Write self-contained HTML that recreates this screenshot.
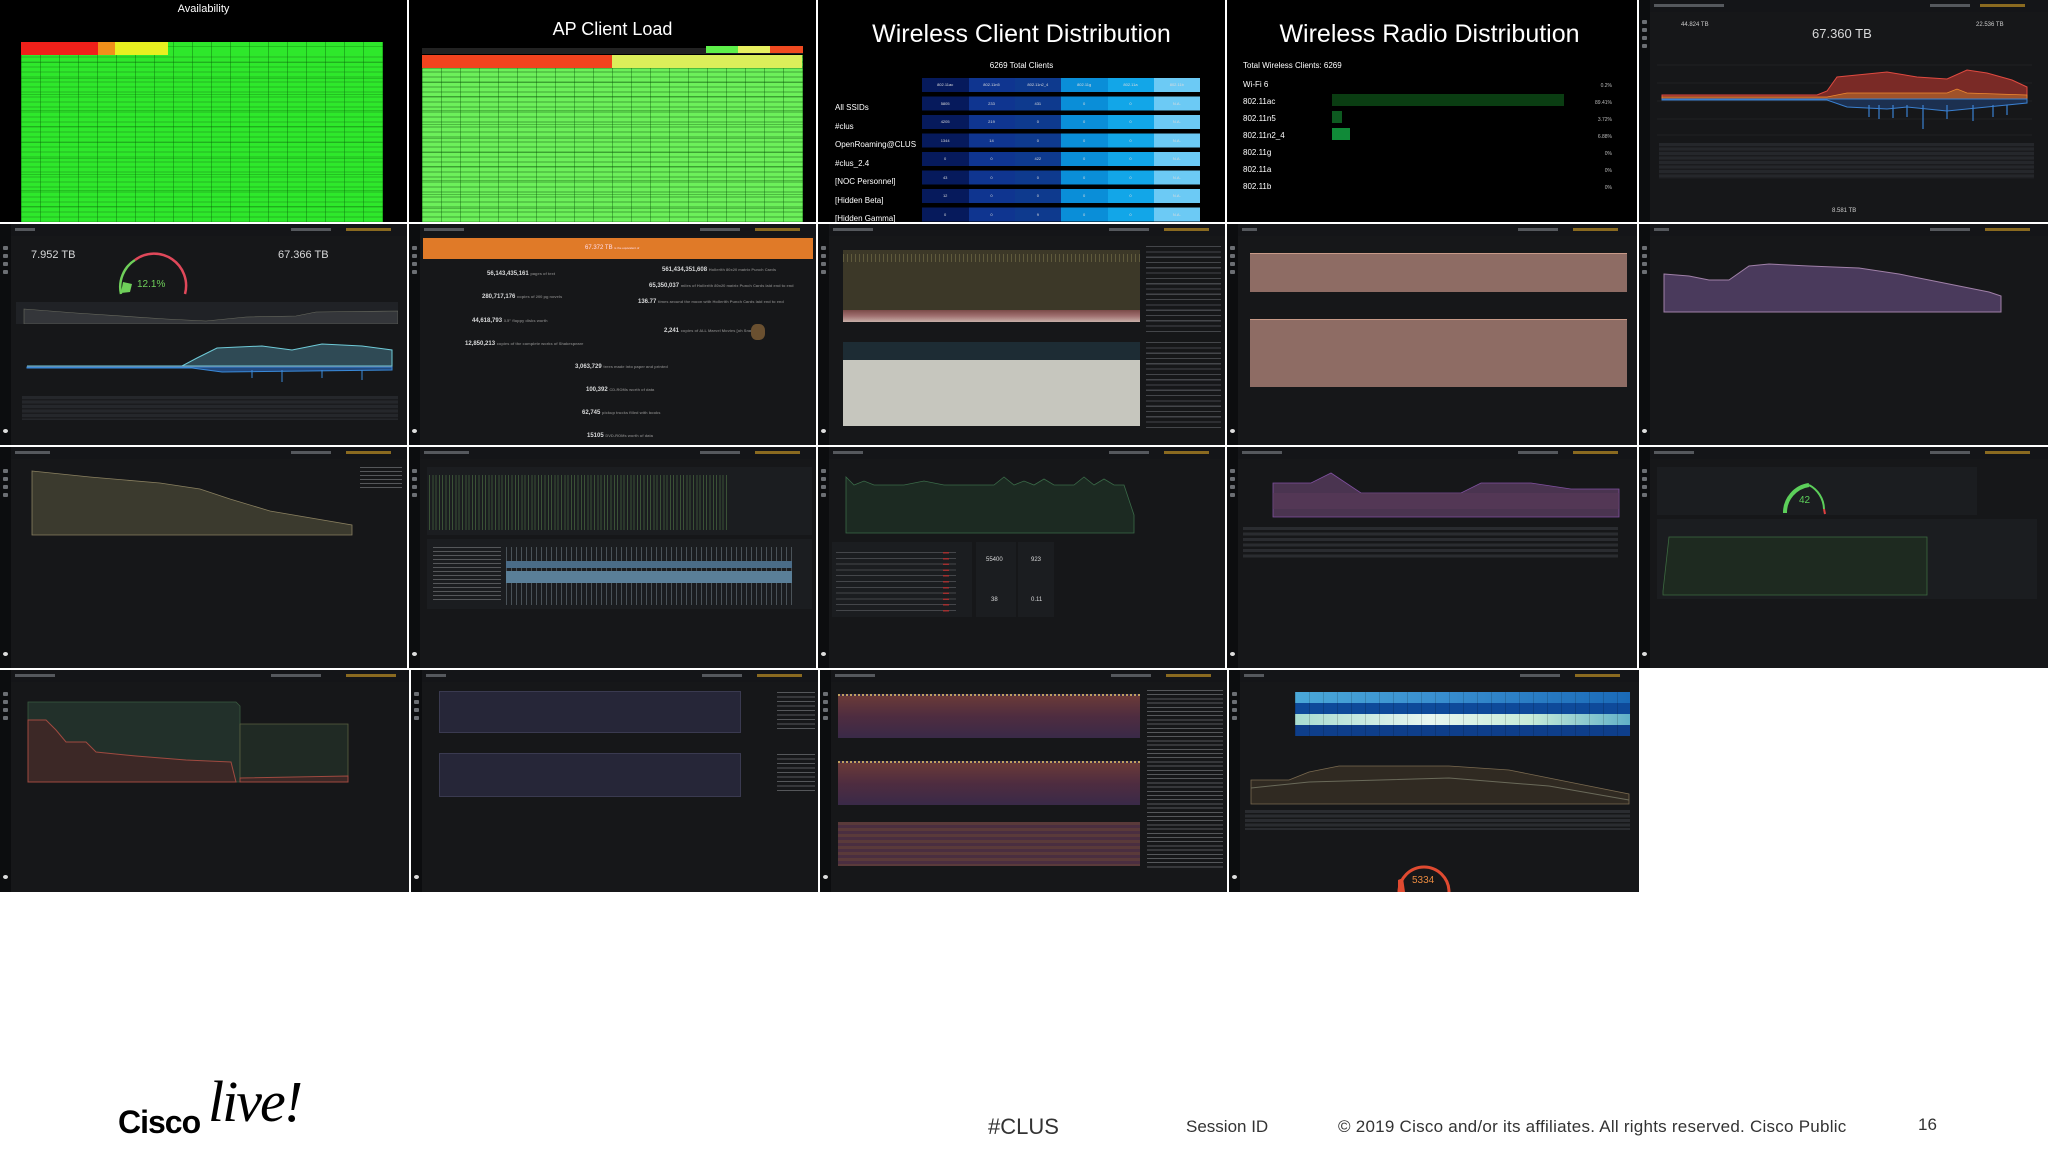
<!DOCTYPE html>
<html><head><meta charset="utf-8"><style>
*{margin:0;padding:0;box-sizing:border-box}
body{width:2048px;height:1152px;background:#fff;position:relative;overflow:hidden;font-family:"Liberation Sans",sans-serif}
.p{position:absolute;overflow:hidden;background:#000}
.g{background:#161719}
.a{position:absolute}
.sb{position:absolute;left:0;top:0;width:11px;height:100%;background:#0c0d0f}
.sb i{position:absolute;left:3px;width:5px;height:4px;background:#6b6e73;border-radius:1px}
.hd{position:absolute;left:11px;top:0;right:0;height:12px;background:#141518}
.hd b{position:absolute;top:4px;height:3px;background:#55585d}
.t{position:absolute;color:#d8d9da;white-space:nowrap}
.w{color:#fff}
.tiny{font-size:4px;color:#777}
.row{position:absolute;left:104px;width:278px;height:14px;font-size:4px;color:#ddd;display:flex}
.row span{flex:1;text-align:center;line-height:14px}
</style></head><body>

<!-- ROW 1 -->
<div class="p" style="left:0;top:0;width:407px;height:222px;">
 <div class="t w" style="left:0;width:407px;text-align:center;top:3px;font-size:11px">Availability</div>
 <div class="a" style="left:21px;top:42px;width:362px;height:181px;background:#2ee82b;background-image:repeating-linear-gradient(90deg,rgba(0,80,0,.35) 0 1px,transparent 1px 19px),repeating-linear-gradient(0deg,rgba(0,80,0,.25) 0 1px,transparent 1px 16px)"></div>
 <div class="a" style="left:21px;top:42px;width:77px;height:13px;background:#f0201a"></div>
 <div class="a" style="left:98px;top:42px;width:17px;height:13px;background:#f0901a"></div>
 <div class="a" style="left:115px;top:42px;width:53px;height:13px;background:#e8f020"></div>
 <div class="a" style="left:21px;top:55px;width:362px;height:168px;background-image:repeating-linear-gradient(0deg,rgba(20,90,20,.35) 0 2px,transparent 2px 5px);opacity:.5"></div>
</div>

<div class="p" style="left:409px;top:0;width:407px;height:222px;">
 <div class="t w" style="left:0;width:407px;text-align:center;top:19px;font-size:18px">AP Client Load</div>
 <div class="a" style="left:13px;top:48px;width:381px;height:6px;background:#222"></div>
 <div class="a" style="left:297px;top:46px;width:97px;height:7px;background:linear-gradient(90deg,#5ef04a 0 33%,#e8f060 33% 66%,#f04a20 66%)"></div>
 <div class="a" style="left:13px;top:55px;width:381px;height:168px;background:#6cf05a;background-image:repeating-linear-gradient(90deg,rgba(0,70,0,.35) 0 1px,transparent 1px 19px),repeating-linear-gradient(0deg,rgba(0,70,0,.3) 0 1px,transparent 1px 14px),repeating-linear-gradient(0deg,rgba(20,90,20,.25) 0 2px,transparent 2px 5px)"></div>
 <div class="a" style="left:13px;top:55px;width:190px;height:13px;background:#f2431e"></div>
 <div class="a" style="left:203px;top:55px;width:190px;height:13px;background:#dcee5a"></div>
</div>

<div class="p" style="left:818px;top:0;width:407px;height:222px;">
 <div class="t w" style="left:0;width:407px;text-align:center;top:20px;font-size:25px">Wireless Client Distribution</div>
 <div class="t w" style="left:0;width:407px;text-align:center;top:61px;font-size:8px">6269 Total Clients</div>
 <div class="t w" style="left:17px;top:99px;font-size:8px;line-height:18.5px">All SSIDs<br>#clus<br>OpenRoaming@CLUS<br>#clus_2.4<br>[NOC Personnel]<br>[Hidden Beta]<br>[Hidden Gamma]</div>
 <div class="a" style="left:104px;top:78px;width:278px;height:145px;background:linear-gradient(90deg,#061a5c 0 47px,#0f3590 47px 93px,#0e3a8e 93px 139px,#0a8ed8 139px 186px,#12a6e8 186px 232px,#6ccaf5 232px)"></div>
 <div class="a" style="left:104px;top:78px;width:278px;height:145px;background:repeating-linear-gradient(180deg,transparent 0 14px,#000 14px 18.5px)"></div>
 <div class="row" style="top:78px"><span>802.11ac</span><span>802.11n5</span><span>802.11n2_4</span><span>802.11g</span><span>802.11a</span><span>802.11b</span></div>
 <div class="row" style="top:96.5px"><span>5805</span><span>233</span><span>431</span><span>0</span><span>0</span><span>N.A.</span></div>
 <div class="row" style="top:115px"><span>4205</span><span>219</span><span>0</span><span>0</span><span>0</span><span>N.A.</span></div>
 <div class="row" style="top:133.5px"><span>1344</span><span>14</span><span>0</span><span>0</span><span>0</span><span>N.A.</span></div>
 <div class="row" style="top:152px"><span>0</span><span>0</span><span>422</span><span>0</span><span>0</span><span>N.A.</span></div>
 <div class="row" style="top:170.5px"><span>43</span><span>0</span><span>0</span><span>0</span><span>0</span><span>N.A.</span></div>
 <div class="row" style="top:189px"><span>12</span><span>0</span><span>0</span><span>0</span><span>0</span><span>N.A.</span></div>
 <div class="row" style="top:207.5px"><span>0</span><span>0</span><span>9</span><span>0</span><span>0</span><span>N.A.</span></div>
</div>

<div class="p" style="left:1227px;top:0;width:410px;height:222px;">
 <div class="t w" style="left:0;width:405px;text-align:center;top:20px;font-size:25px">Wireless Radio Distribution</div>
 <div class="t w" style="left:16px;top:61px;font-size:8px">Total Wireless Clients: 6269</div>
 <div class="t w" style="left:16px;top:76px;font-size:8px;line-height:17px">Wi-Fi 6<br>802.11ac<br>802.11n5<br>802.11n2_4<br>802.11g<br>802.11a<br>802.11b</div>
 <div class="t" style="left:350px;top:78px;font-size:5px;line-height:17px;text-align:right;width:35px;color:#bbb">0.2%<br>89.41%<br>3.72%<br>6.88%<br>0%<br>0%<br>0%</div>
 <div class="a" style="left:105px;top:94px;width:232px;height:12px;background:#0a3d12"></div>
 <div class="a" style="left:105px;top:111px;width:10px;height:12px;background:#0d5a20"></div>
 <div class="a" style="left:105px;top:128px;width:18px;height:12px;background:#108a38"></div>
</div>

<div class="p g" style="left:1639px;top:0;width:409px;height:222px;">
 <div class="sb"><i style="top:20px"></i><i style="top:28px"></i><i style="top:36px"></i><i style="top:44px"></i></div>
 <div class="hd"><b style="left:4px;width:70px"></b><b style="left:280px;width:40px"></b><b style="left:330px;width:45px;background:#8a6a20"></b></div>
 <div class="t" style="left:42px;top:22px;font-size:6px;color:#ccc">44.824 TB</div>
 <div class="t" style="left:173px;top:26px;font-size:13px">67.360 TB</div>
 <div class="t" style="left:337px;top:22px;font-size:6px;color:#ccc">22.536 TB</div>
 <svg class="a" style="left:18px;top:55px" width="375" height="85" viewBox="0 0 375 85">
  <g stroke="#2a2c30" stroke-width=".6"><line x1="0" y1="10" x2="375" y2="10"/><line x1="0" y1="28" x2="375" y2="28"/><line x1="0" y1="46" x2="375" y2="46"/><line x1="0" y1="64" x2="375" y2="64"/><line x1="0" y1="80" x2="375" y2="80"/></g>
  <path d="M5 40 L160 40 L170 36 L180 22 L200 20 L230 17 L260 22 L290 24 L310 15 L330 18 L355 25 L370 32 L370 44 L5 44Z" fill="#7a2a26" stroke="#e04a40" stroke-width="1"/>
  <path d="M5 42 L170 42 L190 38 L290 38 L300 34 L310 38 L370 40 L370 44 L5 44Z" fill="#a0522a" stroke="#f08a30" stroke-width=".8"/>
  <path d="M5 45 L170 45 L190 52 L230 54 L250 52 L290 56 L330 52 L370 48 L370 44 L5 44Z" fill="#1c3050" stroke="#3a80d0" stroke-width="1"/>
  <g stroke="#3a80d0" stroke-width="1.2"><line x1="212" y1="50" x2="212" y2="62"/><line x1="222" y1="50" x2="222" y2="64"/><line x1="236" y1="50" x2="236" y2="63"/><line x1="250" y1="50" x2="250" y2="62"/><line x1="266" y1="50" x2="266" y2="74"/><line x1="290" y1="50" x2="290" y2="64"/><line x1="316" y1="50" x2="316" y2="66"/><line x1="336" y1="50" x2="336" y2="62"/><line x1="350" y1="50" x2="350" y2="60"/></g>
 </svg>
 <div class="a" style="left:20px;top:143px;width:375px;height:36px;background:repeating-linear-gradient(180deg,#25272b 0 3px,#1a1b1e 3px 4.5px)"></div>
 <div class="t" style="left:193px;top:208px;font-size:6px;color:#ccc">8.581 TB</div>
</div>

<!-- ROW 2 -->
<div class="p g" style="left:0;top:224px;width:407px;height:221px;">
 <div class="sb"><i style="top:22px"></i><i style="top:30px"></i><i style="top:38px"></i><i style="top:46px"></i><i style="top:205px;background:#ddd;border-radius:50%"></i></div>
 <div class="hd"><b style="left:4px;width:20px"></b><b style="left:280px;width:40px"></b><b style="left:335px;width:45px;background:#8a6a20"></b></div>
 <div class="t" style="left:31px;top:25px;font-size:11px">7.952 TB</div>
 <svg class="a" style="left:115px;top:22px" width="75" height="50" viewBox="0 0 75 50"><path d="M6 48 A32 32 0 0 1 20 14" stroke="#6fcf5a" stroke-width="2.5" fill="none"/><path d="M20 14 A32 32 0 0 1 70 48" stroke="#e0485a" stroke-width="2.5" fill="none"/><path d="M6 47 L8 36 L17 38 L15 46Z" fill="#6fcf5a"/></svg>
 <div class="t" style="left:137px;top:55px;font-size:10px;color:#6fcf5a">12.1%</div>
 <div class="t" style="left:278px;top:25px;font-size:11px">67.366 TB</div>
 <div class="a" style="left:16px;top:78px;width:382px;height:22px;background:#202226"></div>
 <svg class="a" style="left:16px;top:78px" width="382" height="22"><path d="M8 7 L60 11 L150 17 L190 19 L230 15 L280 14 L300 10 L382 9 L382 22 L8 22Z" fill="#34363a" stroke="#6a6c60" stroke-width=".6"/></svg>
 <svg class="a" style="left:22px;top:112px" width="376" height="50"><path d="M5 30 L160 30 L175 22 L195 12 L240 10 L270 14 L300 8 L340 10 L370 14 L370 30Z" fill="#2f4a55" stroke="#6fcbd8" stroke-width="1"/><path d="M5 31 L370 31" stroke="#c07050" stroke-width="1.5"/><path d="M5 32 L170 32 L200 36 L370 34 L370 31 L5 31Z" fill="#234a80" stroke="#3a8ad8"/><g stroke="#3a8ad8"><line x1="230" y1="34" x2="230" y2="42"/><line x1="260" y1="34" x2="260" y2="46"/><line x1="300" y1="34" x2="300" y2="42"/><line x1="340" y1="34" x2="340" y2="44"/></g></svg>
 <div class="a" style="left:22px;top:172px;width:376px;height:24px;background:repeating-linear-gradient(180deg,#25272b 0 3px,#1a1b1e 3px 4.5px)"></div>
</div>

<div class="p g" style="left:409px;top:224px;width:407px;height:221px;">
 <div class="sb"><i style="top:22px"></i><i style="top:30px"></i><i style="top:38px"></i><i style="top:46px"></i><i style="top:205px;background:#ddd;border-radius:50%"></i></div>
 <div class="hd"><b style="left:4px;width:40px"></b><b style="left:280px;width:40px"></b><b style="left:335px;width:45px;background:#8a6a20"></b></div>
 <div class="a" style="left:14px;top:14px;width:390px;height:21px;background:#e07a28"></div>
 <div class="t" style="left:176px;top:21px;font-size:6px;color:#fde">67.372 TB <span style="font-size:3px">is the equivalent of</span></div>
 <div style="position:absolute;left:0;top:0;width:407px;height:221px;font-size:6px;color:#ddd;font-weight:bold">
  <div class="t" style="left:78px;top:47px">56,143,435,161 <span class="tiny">pages of text</span></div>
  <div class="t" style="left:73px;top:70px">280,717,176 <span class="tiny">copies of 200 pg novels</span></div>
  <div class="t" style="left:63px;top:94px">44,618,793 <span class="tiny">3.5" floppy disks worth</span></div>
  <div class="t" style="left:56px;top:117px">12,850,213 <span class="tiny">copies of the complete works of Shakespeare</span></div>
  <div class="t" style="left:253px;top:43px">561,434,351,608 <span class="tiny">Hollerith 80x20 matrix Punch Cards</span></div>
  <div class="t" style="left:240px;top:59px">65,350,037 <span class="tiny">miles of Hollerith 80x20 matrix Punch Cards laid end to end</span></div>
  <div class="t" style="left:229px;top:75px">136.77 <span class="tiny">times around the moon with Hollerith Punch Cards laid end to end</span></div>
  <div class="t" style="left:255px;top:104px">2,241 <span class="tiny">copies of ALL Marvel Movies [oh Snap]</span></div>
  <div class="a" style="left:342px;top:100px;width:14px;height:16px;background:#6a5030;border-radius:40%"></div>
  <div class="t" style="left:166px;top:140px">3,063,729 <span class="tiny">trees made into paper and printed</span></div>
  <div class="t" style="left:177px;top:163px">100,392 <span class="tiny">CD-ROMs worth of data</span></div>
  <div class="t" style="left:173px;top:186px">62,745 <span class="tiny">pickup trucks filled with books</span></div>
  <div class="t" style="left:178px;top:209px">15105 <span class="tiny">DVD-ROMs worth of data</span></div>
 </div>
</div>

<div class="p g" style="left:818px;top:224px;width:407px;height:221px;">
 <div class="sb"><i style="top:22px"></i><i style="top:30px"></i><i style="top:38px"></i><i style="top:46px"></i><i style="top:205px;background:#ddd;border-radius:50%"></i></div>
 <div class="hd"><b style="left:4px;width:40px"></b><b style="left:280px;width:40px"></b><b style="left:335px;width:45px;background:#8a6a20"></b></div>
 <div class="a" style="left:25px;top:26px;width:297px;height:72px;background:#3c3828;background-image:repeating-linear-gradient(90deg,rgba(200,190,120,.25) 0 1px,transparent 1px 4px);background-size:100% 8px;background-repeat:no-repeat;background-position:0 4px"></div>
 <div class="a" style="left:25px;top:86px;width:297px;height:12px;background:linear-gradient(#7a4a48,#a07070 50%,#c8b0a8)"></div>
 <div class="a" style="left:25px;top:118px;width:297px;height:18px;background:#1d2c34"></div>
 <div class="a" style="left:25px;top:136px;width:297px;height:66px;background:#c6c6be"></div>
 <div class="a" style="left:328px;top:22px;width:75px;height:88px;background:repeating-linear-gradient(180deg,#44464a 0 1.2px,#161719 1.2px 5.3px)"></div>
 <div class="a" style="left:328px;top:118px;width:75px;height:88px;background:repeating-linear-gradient(180deg,#44464a 0 1.2px,#161719 1.2px 5.3px)"></div>
</div>

<div class="p g" style="left:1227px;top:224px;width:410px;height:221px;">
 <div class="sb"><i style="top:22px"></i><i style="top:30px"></i><i style="top:38px"></i><i style="top:46px"></i><i style="top:205px;background:#ddd;border-radius:50%"></i></div>
 <div class="hd"><b style="left:4px;width:15px"></b><b style="left:280px;width:40px"></b><b style="left:335px;width:45px;background:#8a6a20"></b></div>
 <div class="a" style="left:23px;top:29px;width:377px;height:39px;background:#8e6c64;border-top:1px solid #c89a88"></div>
 <div class="a" style="left:23px;top:95px;width:377px;height:68px;background:#8e6c64;border-top:1px solid #c89a88"></div>
</div>

<div class="p g" style="left:1639px;top:224px;width:409px;height:221px;">
 <div class="sb"><i style="top:22px"></i><i style="top:30px"></i><i style="top:38px"></i><i style="top:46px"></i><i style="top:205px;background:#ddd;border-radius:50%"></i></div>
 <div class="hd"><b style="left:4px;width:15px"></b><b style="left:280px;width:40px"></b><b style="left:335px;width:45px;background:#8a6a20"></b></div>
 <svg class="a" style="left:20px;top:30px" width="365" height="60"><path d="M5 20 L30 22 L50 26 L70 26 L90 12 L110 10 L150 12 L200 14 L240 20 L270 26 L290 30 L310 34 L330 38 L342 42 L342 58 L5 58Z" fill="#4a3a5c" stroke="#a080a8" stroke-width="1"/></svg>
</div>

<!-- ROW 3 -->
<div class="p g" style="left:0;top:447px;width:407px;height:221px;">
 <div class="sb"><i style="top:22px"></i><i style="top:30px"></i><i style="top:38px"></i><i style="top:46px"></i><i style="top:205px;background:#ddd;border-radius:50%"></i></div>
 <div class="hd"><b style="left:4px;width:35px"></b><b style="left:280px;width:40px"></b><b style="left:335px;width:45px;background:#8a6a20"></b></div>
 <svg class="a" style="left:30px;top:20px" width="330" height="70"><path d="M2 4 L60 10 L130 16 L170 22 L200 32 L240 44 L322 58 L322 68 L2 68Z" fill="#3b3a2e" stroke="#8a8060" stroke-width=".8"/></svg>
 <div class="a" style="left:360px;top:20px;width:42px;height:22px;background:repeating-linear-gradient(180deg,#55575a 0 1px,#161719 1px 4px)"></div>
</div>

<div class="p g" style="left:409px;top:447px;width:407px;height:221px;">
 <div class="sb"><i style="top:22px"></i><i style="top:30px"></i><i style="top:38px"></i><i style="top:46px"></i><i style="top:205px;background:#ddd;border-radius:50%"></i></div>
 <div class="hd"><b style="left:4px;width:45px"></b><b style="left:280px;width:40px"></b><b style="left:335px;width:45px;background:#8a6a20"></b></div>
 <div class="a" style="left:18px;top:20px;width:385px;height:68px;background:#1b1d20"></div>
 <div class="a" style="left:20px;top:28px;width:298px;height:55px;background:repeating-linear-gradient(90deg,#3f5a3a 0 1px,transparent 1px 3.3px);opacity:.85"></div>
 <div class="a" style="left:18px;top:92px;width:385px;height:70px;background:#1b1d20"></div>
 <div class="a" style="left:97px;top:100px;width:286px;height:58px;background:repeating-linear-gradient(90deg,#4a5258 0 1px,transparent 1px 5px)"></div>
 <div class="a" style="left:97px;top:114px;width:286px;height:7px;background:#4a6c88"></div>
 <div class="a" style="left:97px;top:124px;width:286px;height:12px;background:#5a7f98"></div>
 <div class="a" style="left:24px;top:100px;width:68px;height:55px;background:repeating-linear-gradient(180deg,#55575a 0 1px,transparent 1px 4px)"></div>
</div>

<div class="p g" style="left:818px;top:447px;width:407px;height:221px;">
 <div class="sb"><i style="top:22px"></i><i style="top:30px"></i><i style="top:38px"></i><i style="top:46px"></i><i style="top:205px;background:#ddd;border-radius:50%"></i></div>
 <div class="hd"><b style="left:4px;width:30px"></b><b style="left:280px;width:40px"></b><b style="left:335px;width:45px;background:#8a6a20"></b></div>
 <svg class="a" style="left:26px;top:28px" width="300" height="60"><path d="M2 2 L10 10 L20 6 L30 10 L60 10 L80 6 L100 10 L150 10 L160 2 L170 10 L180 6 L190 10 L200 4 L210 10 L230 10 L240 2 L250 10 L260 4 L270 10 L280 10 L290 40 L290 58 L2 58Z" fill="#1c2a22" stroke="#3a6a48" stroke-width=".8"/></svg>
 <div class="a" style="left:14px;top:95px;width:140px;height:75px;background:#1b1d20"></div>
 <div class="a" style="left:18px;top:105px;width:120px;height:62px;background:repeating-linear-gradient(180deg,#44464a 0 1px,transparent 1px 5.8px)"></div>
 <div class="a" style="left:125px;top:105px;width:6px;height:62px;background:repeating-linear-gradient(180deg,#a03030 0 1.5px,transparent 1.5px 5.8px)"></div>
 <div class="a" style="left:158px;top:95px;width:40px;height:75px;background:#1b1d20"></div>
 <div class="a" style="left:200px;top:95px;width:36px;height:75px;background:#1b1d20"></div>
 <div class="t" style="left:168px;top:110px;font-size:6px">55400</div>
 <div class="t" style="left:213px;top:110px;font-size:6px">923</div>
 <div class="t" style="left:173px;top:150px;font-size:6px">38</div>
 <div class="t" style="left:213px;top:150px;font-size:6px">0.11</div>
</div>

<div class="p g" style="left:1227px;top:447px;width:410px;height:221px;">
 <div class="sb"><i style="top:22px"></i><i style="top:30px"></i><i style="top:38px"></i><i style="top:46px"></i><i style="top:205px;background:#ddd;border-radius:50%"></i></div>
 <div class="hd"><b style="left:4px;width:40px"></b><b style="left:280px;width:40px"></b><b style="left:335px;width:45px;background:#8a6a20"></b></div>
 <svg class="a" style="left:44px;top:22px" width="350" height="50"><path d="M2 14 L40 14 L60 4 L90 24 L190 24 L210 14 L260 14 L300 20 L348 20 L348 48 L2 48Z" fill="#4a3450" stroke="#8050a0" stroke-width=".8"/><path d="M2 24 L348 24 L348 40 L2 40Z" fill="#5a3a58" opacity=".6"/></svg>
 <div class="a" style="left:16px;top:80px;width:375px;height:32px;background:repeating-linear-gradient(180deg,#2a2c30 0 3px,#161719 3px 5.5px)"></div>
</div>

<div class="p g" style="left:1639px;top:447px;width:409px;height:221px;">
 <div class="sb"><i style="top:22px"></i><i style="top:30px"></i><i style="top:38px"></i><i style="top:46px"></i><i style="top:205px;background:#ddd;border-radius:50%"></i></div>
 <div class="hd"><b style="left:4px;width:40px"></b><b style="left:280px;width:40px"></b><b style="left:335px;width:45px;background:#8a6a20"></b></div>
 <div class="a" style="left:18px;top:20px;width:320px;height:48px;background:#1b1d20"></div>
 <svg class="a" style="left:140px;top:24px" width="50" height="45"><path d="M6 42 A28 28 0 0 1 30 14" stroke="#5ccf5a" stroke-width="4" fill="none"/><path d="M30 14 A28 28 0 0 1 45 38" stroke="#5ccf5a" stroke-width="2" fill="none"/><path d="M45 38 L46 43" stroke="#e04040" stroke-width="2"/></svg>
 <div class="t" style="left:160px;top:48px;font-size:10px;color:#5ccf5a">42</div>
 <div class="a" style="left:18px;top:72px;width:380px;height:80px;background:#1b1d20"></div>
 <svg class="a" style="left:22px;top:82px" width="270" height="68"><path d="M2 62 L8 8 L266 8 L266 66 L2 66Z" fill="#1e2a20" stroke="#3c6a40" stroke-width=".8"/></svg>
</div>

<!-- ROW 4 -->
<div class="p g" style="left:0;top:670px;width:409px;height:222px;">
 <div class="sb"><i style="top:22px"></i><i style="top:30px"></i><i style="top:38px"></i><i style="top:46px"></i><i style="top:205px;background:#ddd;border-radius:50%"></i></div>
 <div class="hd"><b style="left:4px;width:40px"></b><b style="left:260px;width:50px"></b><b style="left:335px;width:50px;background:#8a6a20"></b></div>
 <svg class="a" style="left:26px;top:26px" width="330" height="92"><path d="M2 6 L210 6 L214 10 L214 86 L2 86Z" fill="#22302a" stroke="#3a5a40" stroke-width=".8"/><path d="M2 24 L20 24 L30 34 L40 46 L60 46 L70 56 L110 60 L160 64 L205 66 L210 86 L2 86Z" fill="#3c2826" stroke="#a04a40" stroke-width="1"/><path d="M214 28 L322 28 L322 86 L214 86Z" fill="#202a24" stroke="#5a6040" stroke-width=".8"/><path d="M214 82 L322 80 L322 86 L214 86Z" fill="#3c2826" stroke="#a04a40"/></svg>
</div>

<div class="p g" style="left:411px;top:670px;width:407px;height:222px;">
 <div class="sb"><i style="top:22px"></i><i style="top:30px"></i><i style="top:38px"></i><i style="top:46px"></i><i style="top:205px;background:#ddd;border-radius:50%"></i></div>
 <div class="hd"><b style="left:4px;width:20px"></b><b style="left:280px;width:40px"></b><b style="left:335px;width:45px;background:#8a6a20"></b></div>
 <div class="a" style="left:28px;top:21px;width:302px;height:42px;background:#262638;border:1px solid #3a3a50"></div>
 <div class="a" style="left:28px;top:83px;width:302px;height:44px;background:#262638;border:1px solid #3a3a50"></div>
 <div class="a" style="left:366px;top:22px;width:38px;height:40px;background:repeating-linear-gradient(180deg,#55575a 0 1px,transparent 1px 4.5px)"></div>
 <div class="a" style="left:366px;top:84px;width:38px;height:40px;background:repeating-linear-gradient(180deg,#55575a 0 1px,transparent 1px 4.5px)"></div>
</div>

<div class="p g" style="left:820px;top:670px;width:407px;height:222px;">
 <div class="sb"><i style="top:22px"></i><i style="top:30px"></i><i style="top:38px"></i><i style="top:46px"></i><i style="top:205px;background:#ddd;border-radius:50%"></i></div>
 <div class="hd"><b style="left:4px;width:40px"></b><b style="left:280px;width:40px"></b><b style="left:335px;width:45px;background:#8a6a20"></b></div>
 <div class="a" style="left:18px;top:24px;width:302px;height:44px;background:linear-gradient(#6a3a38,#4e2c40 50%,#3a2a48);border-top:2px dotted #c0a060"></div>
 <div class="a" style="left:18px;top:91px;width:302px;height:44px;background:linear-gradient(#6a3a38,#4e2c40 50%,#3a2a48);border-top:2px dotted #c0a060"></div>
 <div class="a" style="left:18px;top:152px;width:302px;height:44px;background:repeating-linear-gradient(180deg,#5a3a3a 0 3px,#4a2e40 3px 6px)"></div>
 <div class="a" style="left:327px;top:20px;width:76px;height:180px;background:repeating-linear-gradient(180deg,#55575a 0 1px,transparent 1px 4.2px)"></div>
</div>

<div class="p g" style="left:1229px;top:670px;width:410px;height:222px;">
 <div class="sb"><i style="top:22px"></i><i style="top:30px"></i><i style="top:38px"></i><i style="top:46px"></i><i style="top:205px;background:#ddd;border-radius:50%"></i></div>
 <div class="hd"><b style="left:4px;width:20px"></b><b style="left:280px;width:40px"></b><b style="left:335px;width:45px;background:#8a6a20"></b></div>
 <div class="a" style="left:66px;top:22px;width:335px;height:11px;background:linear-gradient(90deg,#4aa8d8,#3a90d0 40%,#1a6ab8)"></div>
 <div class="a" style="left:66px;top:33px;width:335px;height:11px;background:#0e4a9a"></div>
 <div class="a" style="left:66px;top:44px;width:335px;height:11px;background:linear-gradient(90deg,#a8dcd0,#e8f6f0 40%,#c8ecd8 70%,#60b0c8)"></div>
 <div class="a" style="left:66px;top:55px;width:335px;height:11px;background:#0e3e8a"></div>
 <div class="a" style="left:66px;top:22px;width:335px;height:44px;background:repeating-linear-gradient(90deg,rgba(0,0,0,.15) 0 1px,transparent 1px 14px)"></div>
 <svg class="a" style="left:20px;top:90px" width="382" height="45"><path d="M2 20 L40 20 L60 12 L90 6 L200 6 L260 10 L300 18 L340 26 L380 34 L380 44 L2 44Z" fill="#302a22" stroke="#7a6a50" stroke-width=".8"/><path d="M2 28 L60 22 L200 18 L300 26 L380 40" stroke="#6a6a5a" fill="none"/></svg>
 <div class="a" style="left:16px;top:140px;width:385px;height:20px;background:repeating-linear-gradient(180deg,#2a2c30 0 3px,#161719 3px 4.5px)"></div>
 <svg class="a" style="left:160px;top:180px" width="70" height="42"><path d="M10 42 A25 25 0 0 1 60 42" stroke="#2a2c30" stroke-width="3" fill="none"/><path d="M10 42 A25 25 0 0 1 60 42" stroke="#e04a30" stroke-width="3" fill="none"/><path d="M9 42 L9 30 L14 28 L16 42Z" fill="#e04a30"/></svg>
 <div class="t" style="left:183px;top:205px;font-size:10px;color:#e88a40">5334</div>
</div>

<!-- FOOTER -->
<div class="t" style="left:118px;top:1104px;font-size:32px;font-weight:bold;color:#000;letter-spacing:-1px">Cisco</div>
<div class="t" style="left:208px;top:1068px;font-size:58px;font-style:italic;color:#000;font-family:'Liberation Serif',serif;letter-spacing:-2px">live!</div>
<div class="t" style="left:988px;top:1114px;font-size:22px;color:#333">#CLUS</div>
<div class="t" style="left:1186px;top:1117px;font-size:17px;color:#333">Session ID</div>
<div class="t" style="left:1338px;top:1117px;font-size:17px;color:#333;letter-spacing:.25px">© 2019  Cisco and/or its affiliates. All rights reserved.   Cisco Public</div>
<div class="t" style="left:1918px;top:1115px;font-size:17px;color:#333">16</div>
</body></html>
